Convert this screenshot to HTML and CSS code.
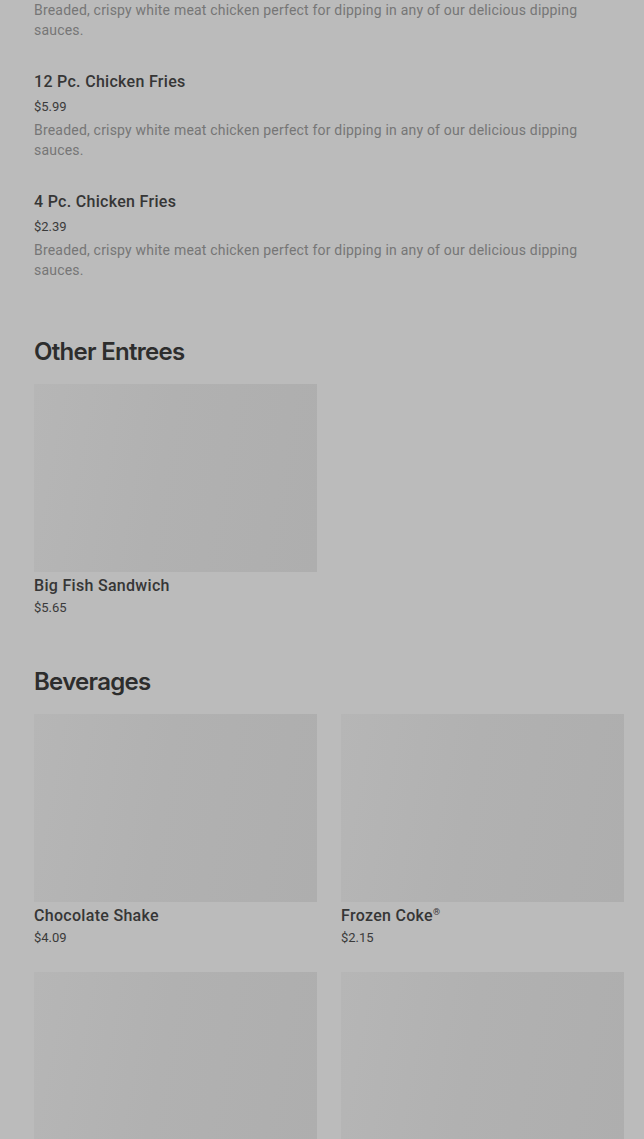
FILE: index.html
```html
<!DOCTYPE html>
<html lang="en">
<head>
	<meta charset="UTF-8">
	<meta name="viewport" content="width=device-width, initial-scale=1.0">
	<title>Menu</title>
	<link rel="stylesheet" href="styles.css">
</head>
<body>
	<main class="menu">
		<section class="list">
			<div class="item item_cut">
				<p class="item_desc">Breaded, crispy white meat chicken perfect for dipping in any of our delicious dipping sauces.</p>
			</div>
			<div class="item">
				<h3 class="item_name">12 Pc. Chicken Fries</h3>
				<p class="item_price">$5.99</p>
				<p class="item_desc">Breaded, crispy white meat chicken perfect for dipping in any of our delicious dipping sauces.</p>
			</div>
			<div class="item">
				<h3 class="item_name">4 Pc. Chicken Fries</h3>
				<p class="item_price">$2.39</p>
				<p class="item_desc">Breaded, crispy white meat chicken perfect for dipping in any of our delicious dipping sauces.</p>
			</div>
		</section>

		<section class="group">
			<h2 class="group_title">Other Entrees</h2>
			<ul class="cards">
				<li class="card">
					<div class="card_pic"></div>
					<h3 class="item_name">Big Fish Sandwich</h3>
					<p class="item_price">$5.65</p>
				</li>
			</ul>
		</section>

		<section class="group">
			<h2 class="group_title">Beverages</h2>
			<ul class="cards">
				<li class="card">
					<div class="card_pic"></div>
					<h3 class="item_name">Chocolate Shake</h3>
					<p class="item_price">$4.09</p>
				</li>
				<li class="card">
					<div class="card_pic"></div>
					<h3 class="item_name">Frozen Coke<sup>®</sup></h3>
					<p class="item_price">$2.15</p>
				</li>
				<li class="card">
					<div class="card_pic"></div>
					<h3 class="item_name">&nbsp;</h3>
					<p class="item_price">&nbsp;</p>
				</li>
				<li class="card">
					<div class="card_pic"></div>
					<h3 class="item_name">&nbsp;</h3>
					<p class="item_price">&nbsp;</p>
				</li>
			</ul>
		</section>
	</main>
</body>
</html>
```

FILE: styles.css
```css
*{margin:0; padding:0;}
li{list-style:none;}
html,body{
	background-color:#bbbbbb;
	font-family:Roboto, "Liberation Sans", sans-serif;
}
body{
	height:1139px;
	overflow:hidden;
}
.menu{
	padding:0 20px 0 34px;
}
.item{
	margin-bottom:30px;
}
.item_name{
	font-size:16px;
	line-height:24px;
	font-weight:500;
	letter-spacing:0.3px;
	color:#363636;
}
.item_name sup{
	font-size:9px;
	line-height:0;
	vertical-align:6px;
}
.item_price{
	font-size:13px;
	line-height:20px;
	color:#3a3a3a;
}
.item .item_price{
	margin-top:3px;
}
.item_desc{
	margin-top:3px;
	font-size:14px;
	line-height:20px;
	letter-spacing:0.2px;
	color:#767676;
}
.item_cut .item_desc{
	margin-top:0;
}
.list .item:last-child{
	margin-bottom:0;
}
.group{
	padding-top:56px;
}
.group + .group{
	padding-top:48px;
}
.group_title{
	font-family:Inter, "Liberation Sans", sans-serif;
	font-size:24px;
	line-height:32px;
	font-weight:600;
	letter-spacing:-0.7px;
	color:#2d2d2d;
	margin-bottom:16px;
}
.cards{
	display:grid;
	grid-template-columns:283px 283px;
	gap:24px;
}
.card_pic{
	height:188px;
	margin-bottom:2px;
	background:linear-gradient(100deg, #b6b6b6 0%, #b1b1b1 45%, #aeaeae 100%);
}
```
